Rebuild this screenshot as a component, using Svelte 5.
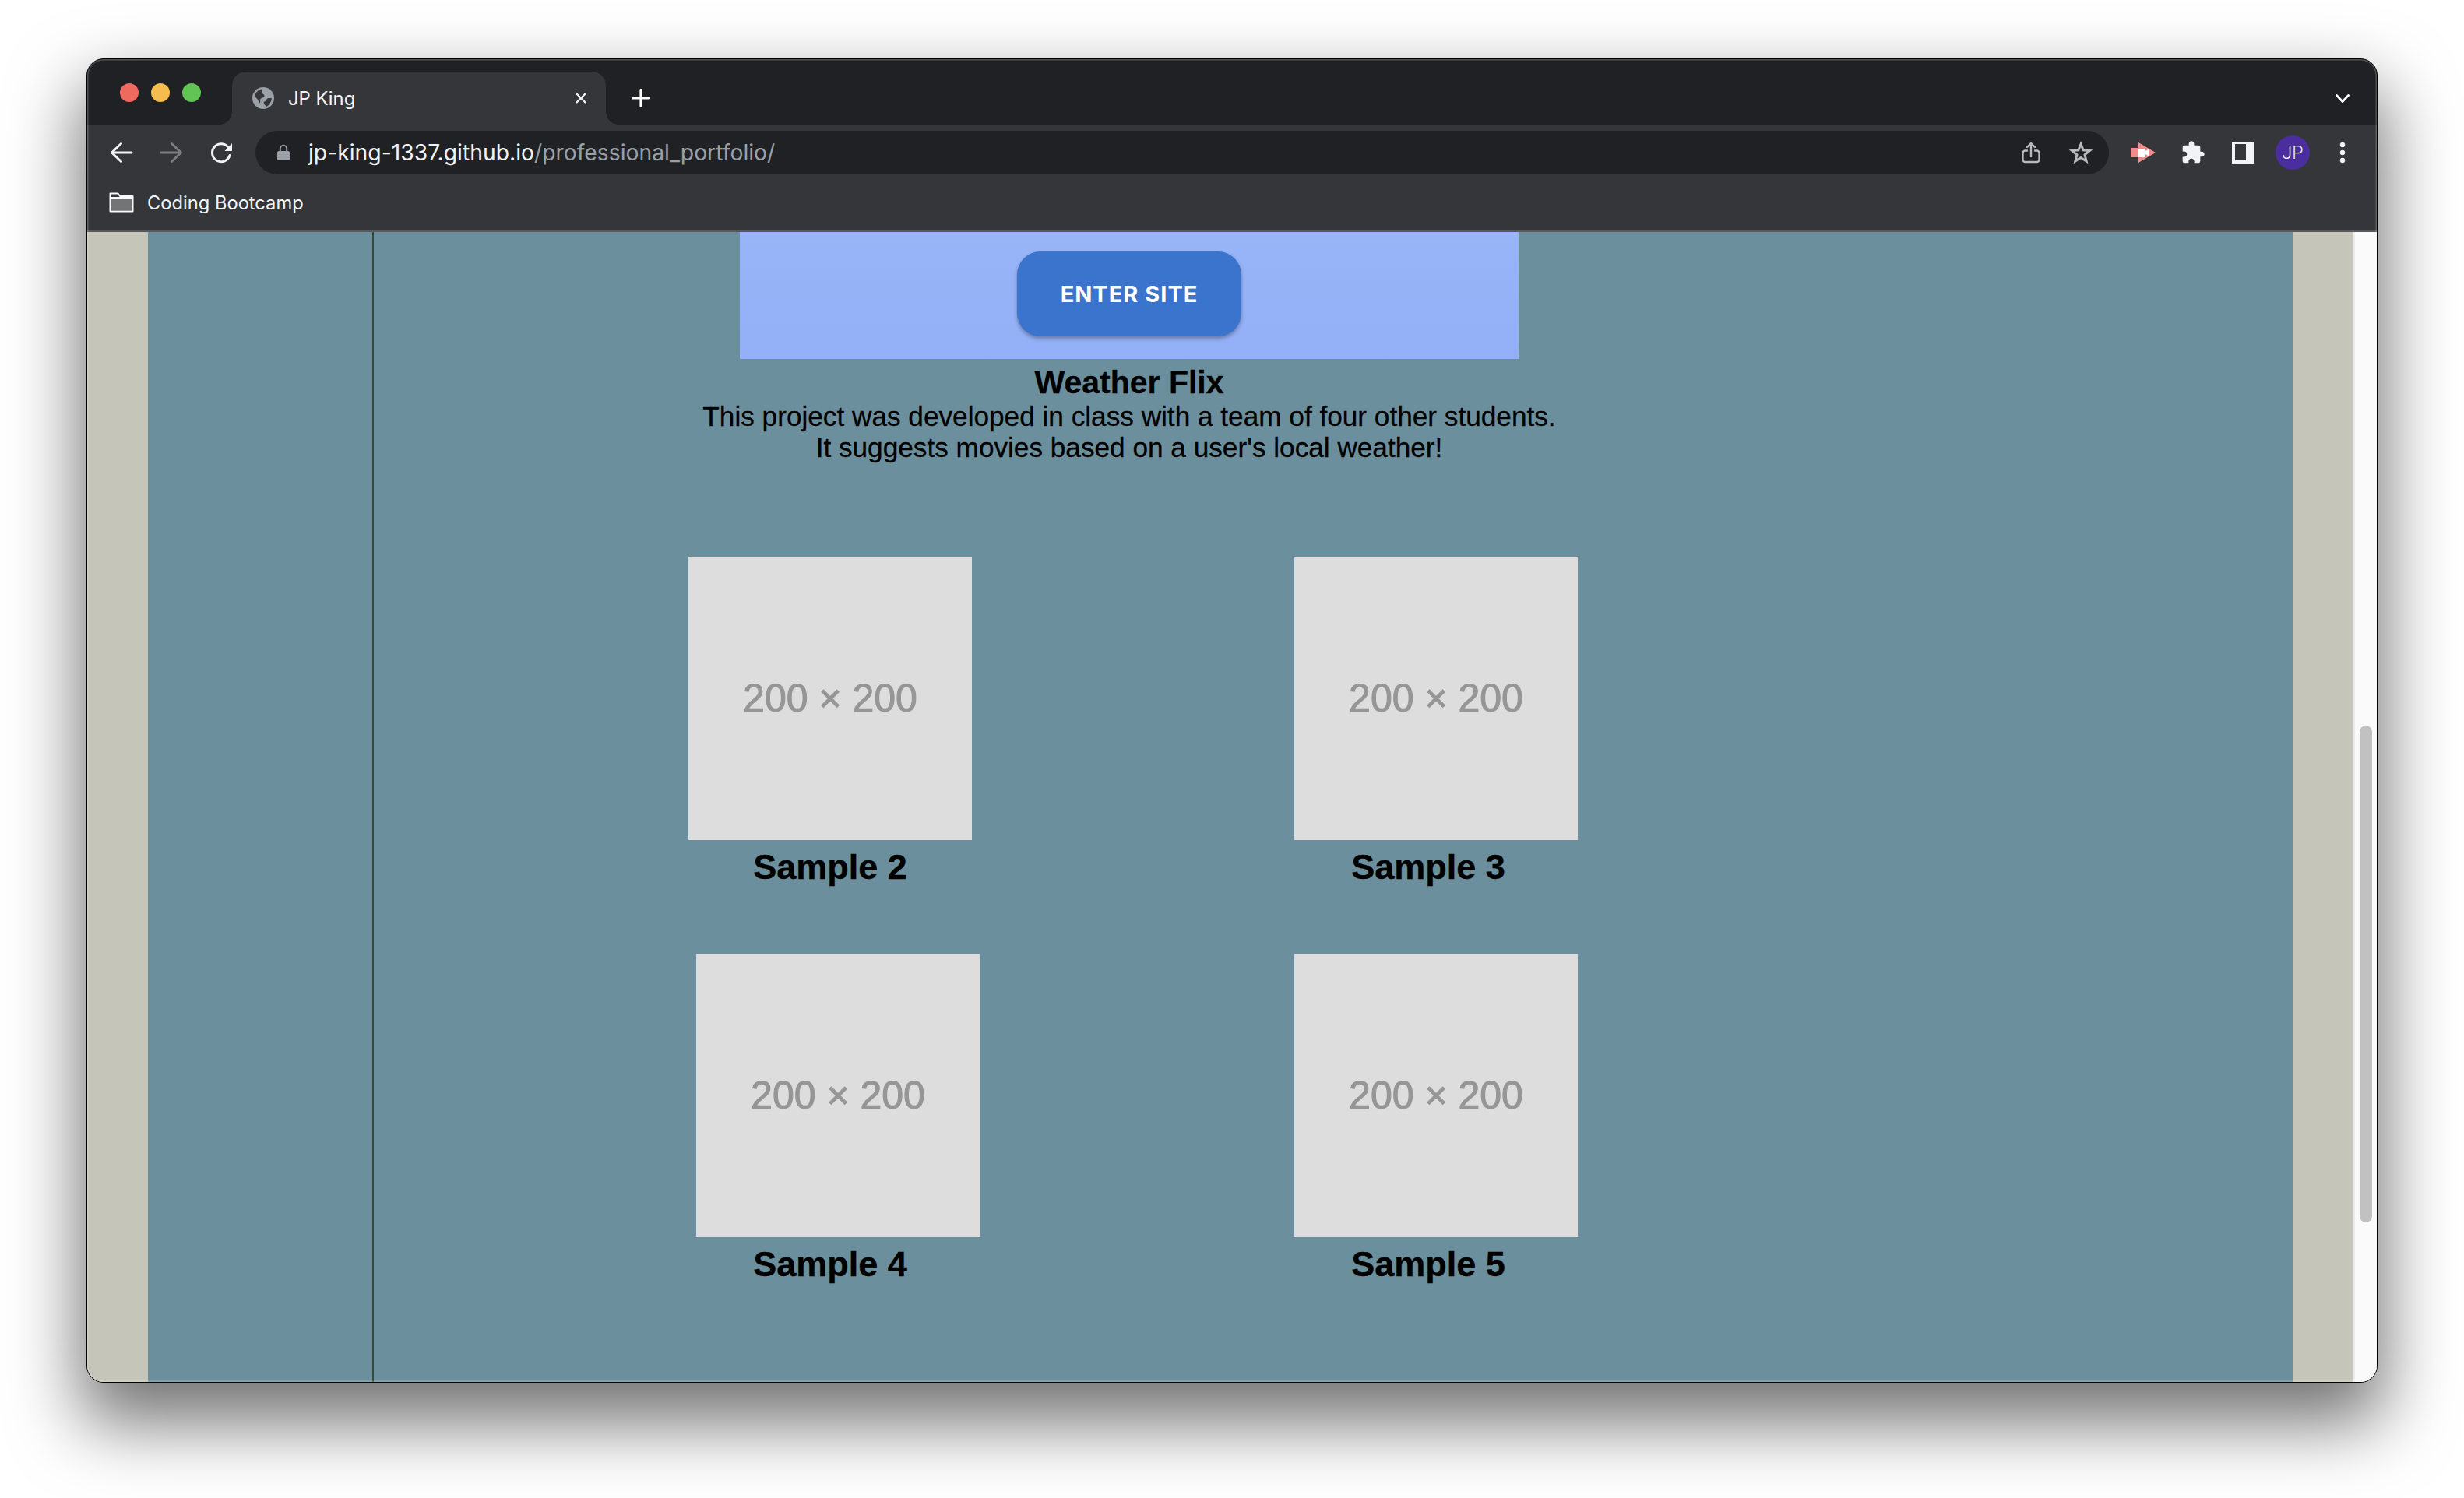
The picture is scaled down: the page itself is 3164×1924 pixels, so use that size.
<script lang="ts">
	const samples = [
		{ name: 'Sample 2', shift: false },
		{ name: 'Sample 3', shift: true },
		{ name: 'Sample 4', shift: true },
		{ name: 'Sample 5', shift: true }
	];
</script>

<div class="desktop">
	<div class="window">
		<div class="tabstrip">
			<div class="traffic">
				<span class="dot red"></span>
				<span class="dot yellow"></span>
				<span class="dot green"></span>
			</div>
			<div class="tab">
				<svg class="globe" viewBox="0 0 28 28" width="28" height="28">
					<circle cx="14" cy="14" r="14" fill="#9aa0a6" />
					<path d="M12 2.500C7 3.500 3.500 7.500 3 12.500c2 .5 3 2 4 3.500s1 3.500 3 4.500c1-2.500-1-4.500 1-6 2-1.500 4-1 4.500-3 .5-2-2.500-2.500-3-4.500-.3-1.500.5-3-.5-4.500z" fill="#35363a" />
					<path d="M25 14c-2 .5-3.500-.5-5.500.5-2 1-1 3-3 3.500-1.500.5-2.500 1.500-1.500 3s2 3 3 4c3.500-1.500 6.500-6 7-11z" fill="#35363a" />
				</svg>
				<span class="tab-title">JP King</span>
				<svg class="tab-close" viewBox="0 0 14 14" width="14" height="14">
					<path d="M1.500 1.500 12.500 12.500M12.500 1.500 1.500 12.500" stroke="#f1f3f4" stroke-width="2.400" stroke-linecap="round" />
				</svg>
			</div>
			<svg class="new-tab" viewBox="0 0 24 24" width="24" height="24">
				<path d="M12 1.500V22.500M1.500 12H22.500" stroke="#fff" stroke-width="3.200" stroke-linecap="round" />
			</svg>
			<svg class="tab-menu" viewBox="0 0 18 12" width="18" height="12">
				<path d="M1.500 1.500 9 9.500 16.500 1.500" fill="none" stroke="#fff" stroke-width="2.800" stroke-linecap="round" stroke-linejoin="round" />
			</svg>
		</div>

		<div class="toolbar">
			<div class="btn">
				<svg viewBox="0 0 32 32" width="32" height="32" fill="none" stroke="#f1f3f4" stroke-width="3" stroke-linecap="round" stroke-linejoin="round">
					<path d="M29 16H4M15.500 4.500 3.500 16 15.500 27.500" />
				</svg>
			</div>
			<div class="btn">
				<svg viewBox="0 0 32 32" width="32" height="32" fill="none" stroke="#7c7d80" stroke-width="3" stroke-linecap="round" stroke-linejoin="round">
					<path d="M3 16H28M16.500 4.500 28.500 16 16.500 27.500" />
				</svg>
			</div>
			<div class="btn">
				<svg viewBox="0 0 32 32" width="32" height="32">
					<path d="M24.500 8.500A11.500 11.500 0 1 0 27 19.500" fill="none" stroke="#f1f3f4" stroke-width="3" stroke-linecap="round" />
					<path d="M30 4V14H20.500Z" fill="#f1f3f4" />
				</svg>
			</div>
			<div class="omnibox">
				<svg class="lock" viewBox="0 0 16 21" width="16" height="21">
					<path d="M3.800 10V6a4.200 4.200 0 0 1 8.400 0v4" fill="none" stroke="#9aa0a6" stroke-width="2" />
					<rect x="0" y="9" width="16" height="12" rx="2" fill="#9aa0a6" />
				</svg>
				<div class="url">jp-king-1337.github.io<span>/professional_portfolio/</span></div>
				<svg class="omni-icon" viewBox="0 0 32 32" width="32" height="32" fill="none" stroke="#b8babc" stroke-width="2.400" stroke-linecap="round" stroke-linejoin="round">
					<path d="M11 13.500H8.500a3 3 0 0 0-3 3V25a3 3 0 0 0 3 3h15a3 3 0 0 0 3-3v-8.500a3 3 0 0 0-3-3H21" />
					<path d="M16 21V4.500M11 9 16 4l5 5" />
				</svg>
				<svg class="omni-icon" viewBox="0 0 32 32" width="32" height="32" fill="none" stroke="#b8babc" stroke-width="3" stroke-linejoin="miter">
					<path d="M16 5 19.100 12.900 27.500 13.400 21 18.800 23.100 27 16 22.500 8.900 27 11 18.800 4.500 13.400 12.900 12.900Z" />
				</svg>
			</div>
			<div class="btn">
				<svg viewBox="0 0 32 26" width="32" height="26">
					<path d="M0 7H10V0L32 13 10 26V19H0Z" fill="#f28b8b" />
					<path d="M10 8H19V11L24 8V18L19 15V19H10Z" fill="#fff" />
				</svg>
			</div>
			<div class="btn">
				<svg viewBox="0 0 24 24" width="32" height="32">
					<path d="M20.500 11H19V7c0-1.100-.9-2-2-2h-4V3.500C13 2.120 11.880 1 10.500 1S8 2.120 8 3.500V5H4c-1.100 0-1.990.9-1.990 2v3.800H3.500c1.490 0 2.700 1.210 2.700 2.700s-1.210 2.700-2.700 2.700H2V20c0 1.100.9 2 2 2h3.800v-1.500c0-1.490 1.210-2.700 2.700-2.700 1.490 0 2.700 1.210 2.700 2.700V22H17c1.100 0 2-.9 2-2v-4h1.500c1.380 0 2.500-1.120 2.500-2.500S21.880 11 20.500 11z" fill="#f1f3f4" />
				</svg>
			</div>
			<div class="btn">
				<div class="panel-icon"></div>
			</div>
			<div class="btn">
				<div class="avatar">JP</div>
			</div>
			<div class="btn">
				<svg viewBox="0 0 8 28" width="8" height="28" fill="#f1f3f4">
					<circle cx="4" cy="4" r="3.200" />
					<circle cx="4" cy="14" r="3.200" />
					<circle cx="4" cy="24" r="3.200" />
				</svg>
			</div>
		</div>

		<div class="bookmarks">
			<svg viewBox="0 0 32 26" width="32" height="26">
				<path d="M1.500 7V24.500H30.500V5H14L11.500 1.500H1.500V7H30.500" fill="none" stroke="#f8f9fa" stroke-width="2" stroke-linejoin="round" />
				<rect x="3" y="8" width="26" height="15" fill="#737476" />
			</svg>
			<span>Coding Bootcamp</span>
		</div>

		<div class="viewport">
			<div class="gutter"></div>
			<div class="page">
				<aside class="sidebar"></aside>
				<main class="main">
					<section class="project">
						<div class="shot">
							<div class="enter">ENTER SITE</div>
						</div>
						<h3>Weather Flix</h3>
						<p>This project was developed in class with a team of four other students.<br />It suggests movies based on a user's local weather!</p>
					</section>
					<section class="samples">
						{#each samples as s}
							<div class="sample">
								<div class="thumb" class:shift={s.shift}>200 × 200</div>
								<h2>{s.name}</h2>
							</div>
						{/each}
					</section>
				</main>
			</div>
			<div class="gutter"></div>
			<div class="scrollbar"><div class="scroll-thumb"></div></div>
		</div>
	</div>
</div>

<style>
	:global(body) { margin: 0; background: #fff; overflow: hidden; }

	.desktop {
		width: 3164px; height: 1924px;
		padding: 75px 0 0 111px;
		box-sizing: border-box;
		background: #fff;
	}

	.window {
		position: relative;
		width: 2942px; height: 1701px;
		box-sizing: border-box;
		border: 1px solid #000;
		border-radius: 22px;
		overflow: hidden;
		display: flex; flex-direction: column;
		background: #35363a;
		box-shadow: 0 44px 90px 8px rgba(0,0,0,.55);
		font-family: Inter, "Liberation Sans", sans-serif;
	}
	.window::after {
		content: '';
		position: absolute; inset: 0;
		border-radius: 21px;
		box-shadow: inset 0 0 0 1.500px rgba(255,255,255,.22);
		pointer-events: none;
	}

	.tabstrip {
		position: relative;
		height: 84px; flex: none;
		background: #202124;
		display: flex; align-items: flex-end;
	}
	.traffic {
		position: absolute; left: 42px; top: 31px;
		display: flex; gap: 16px;
	}
	.dot { width: 24px; height: 24px; border-radius: 50%; }
	.red { background: #ee6a5f; }
	.yellow { background: #f5bd4f; }
	.green { background: #61c454; }

	.tab {
		position: relative;
		margin-left: 186px;
		width: 480px; height: 68px;
		background: #35363a;
		border-radius: 18px 18px 0 0;
		display: flex; align-items: center;
		padding: 0 25px 0 26px;
		box-sizing: border-box;
	}
	.tab::before, .tab::after {
		content: '';
		position: absolute; bottom: 0;
		width: 16px; height: 16px;
	}
	.tab::before { left: -16px; background: radial-gradient(circle at 0 0, #202124 15.500px, #35363a 16px); }
	.tab::after { right: -16px; background: radial-gradient(circle at 100% 0, #202124 15.500px, #35363a 16px); }
	.globe { flex: none; }
	.tab-title {
		margin-left: 18px;
		font-size: 23.800px; color: #f1f3f4;
		flex: 1;
	}
	.tab-close { flex: none; }
	.new-tab { position: absolute; left: 699px; top: 38px; }
	.tab-menu { position: absolute; right: 35px; top: 45px; }

	.toolbar {
		height: 72px; flex: none;
		display: flex; align-items: flex-start;
		padding: 8px 12px 0;
		box-sizing: border-box;
	}
	.btn {
		width: 64px; height: 56px; flex: none;
		display: flex; align-items: center; justify-content: center;
	}
	.omnibox {
		flex: 1;
		margin: 0 12px;
		height: 56px;
		background: #202124;
		border-radius: 28px;
		display: flex; align-items: center;
		padding: 0 20px 0 28px;
		box-sizing: border-box;
	}
	.lock { flex: none; margin-top: -2px; }
	.url {
		flex: 1;
		margin-left: 24px;
		font-size: 28.300px;
		color: #f1f3f4;
		white-space: nowrap;
	}
	.url span { color: #9aa0a6; }
	.omni-icon { flex: none; margin-left: 32px; }

	.panel-icon {
		width: 28px; height: 28px;
		box-sizing: border-box;
		background: #35363a;
		border-style: solid;
		border-color: #f1f3f4;
		border-width: 3px 10px 4px 4px;
	}
	.avatar {
		width: 44px; height: 44px;
		border-radius: 50%;
		background: #4a2ea0;
		color: #f1f3f4;
		font: 300 23px Roboto, sans-serif;
		display: flex; align-items: center; justify-content: center;
	}

	.bookmarks {
		height: 64px; flex: none;
		display: flex; align-items: center; gap: 17px;
		padding: 0 0 8px 28px;
		box-sizing: border-box;
		font-size: 23.700px; color: #f1f3f4;
	}

	.viewport {
		flex: 1; min-height: 0;
		display: flex;
		border-top: 2px solid #58595c;
		background: #c5c5b9;
	}
	.gutter { width: 78px; flex: none; background: #c5c5b9; }
	.page {
		flex: 1;
		display: flex;
		background: #6b8f9c;
		color: #000;
		font-family: "Liberation Sans", Arial, sans-serif;
	}
	.sidebar {
		width: 288px; flex: none;
		border-right: 2px solid #3c4832;
	}
	.main { flex: 1; }

	.project {
		width: 1100px;
		margin-left: 420px;
		display: flex; flex-direction: column; align-items: center;
		text-align: center;
	}
	.shot {
		width: 1000px; height: 163px;
		background: linear-gradient(180deg, #98b5f8, #93aff6);
		display: flex; justify-content: center;
		padding-top: 25px;
		box-sizing: border-box;
	}
	.enter {
		width: 288px; height: 109px;
		border-radius: 30px;
		background: #3a74cc;
		box-shadow: 0 3px 5px rgba(0,0,0,.3);
		color: #fff;
		font: 700 29px/109px Inter, sans-serif;
		letter-spacing: 1px;
		text-align: center;
	}
	.project h3 {
		margin: 7px 0 0;
		font-size: 41px; line-height: 47px;
		font-weight: 700;
		-webkit-text-stroke: .3px #000;
	}
	.project p {
		margin: 0;
		font-size: 35.200px; line-height: 40px;
		white-space: nowrap;
		-webkit-text-stroke: .3px #000;
	}

	.samples {
		margin: 120px 0 0 404px;
		display: grid;
		grid-template-columns: 364px 374px;
		column-gap: 404px;
		row-gap: 76px;
	}
	.sample h2 {
		width: 364px;
		margin: 0;
		text-align: center;
		font-size: 45px; line-height: 70px;
		font-weight: 700;
		-webkit-text-stroke: .4px #000;
	}
	.thumb {
		width: 364px; height: 364px;
		background: #ddd;
		color: #969696;
		font-size: 50px;
		-webkit-text-stroke: 1.100px #969696;
		display: flex; align-items: center; justify-content: center;
	}
	.thumb.shift { margin-left: 10px; }

	.scrollbar {
		width: 16px; flex: none;
		background: #fafafa;
		border-left: 2px solid #ebebeb;
		padding: 634px 6px 0 6px;
	}
	.scroll-thumb {
		width: 16px; height: 638px;
		border-radius: 8px;
		background: #c1c1c1;
	}
</style>
